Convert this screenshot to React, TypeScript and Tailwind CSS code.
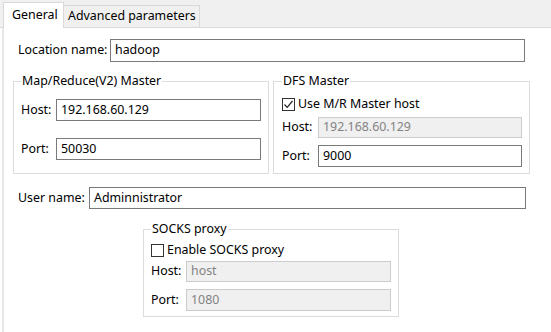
import React from "react";

const font = { fontFamily: '"Noto Sans", "Liberation Sans", sans-serif' };

function Input({ value, w, h = 22, disabled = false }: { value: string; w: number; h?: number; disabled?: boolean }) {
  return (
    <div
      className={
        "flex items-center pl-[4px] text-[12.4px] leading-none " +
        (disabled ? "bg-[#f0f0f0] border border-[#cccccc] text-[#838383]" : "bg-white border border-[#7a7a7a] text-black")
      }
      style={{ width: w, height: h }}
    >
      {value}
    </div>
  );
}

function Check({ checked }: { checked: boolean }) {
  return (
    <div className="w-[13px] h-[13px] border border-[#333333] bg-white flex items-center justify-center">
      {checked && (
        <svg width="11" height="11" viewBox="0 0 11 11">
          <path d="M1.5 5.5 L4.2 8.3 L9.5 2" stroke="#222" strokeWidth="1.2" fill="none" />
        </svg>
      )}
    </div>
  );
}

export default function App() {
  return (
    <div className="w-[551px] h-[332px] bg-white overflow-hidden text-[12.4px] text-black" style={font}>
      {/* tab bar */}
      <div className="h-[28px] bg-[#f0f0f0] border-b border-[#d9d9d9] flex items-end pl-[3px]">
        <div className="w-[61px] h-[26px] bg-white border border-[#d9d9d9] border-b-0 mb-[-1px] pl-[8px] pt-[4px] leading-[16px]">
          General
        </div>
        <div className="w-[136px] h-[22px] bg-[#f0f0f0] border border-[#d9d9d9] border-l-0 border-b-0 pl-[4px] pt-[2px] leading-[16px]">
          Advanced parameters
        </div>
      </div>
      {/* content */}
      <div className="ml-[2px] h-[304px] border-l-2 border-[#e8e8e8] flex flex-col">
        {/* location */}
        <div className="flex items-center mt-[11px] ml-[14px]">
          <div className="w-[92px]">Location name:</div>
          <Input value="hadoop" w={415} h={23} />
        </div>
        {/* groups */}
        <div className="flex mt-[11px] ml-[9px] gap-[4px]">
          <fieldset className="w-[256px] border border-[#dcdcdc] pl-[7px] pb-[11px]">
            <legend className="px-[1px] leading-[16px]">Map/Reduce(V2) Master</legend>
            <div className="flex items-center mt-[10px]">
              <div className="w-[35px]">Host:</div>
              <Input value="192.168.60.129" w={205} />
            </div>
            <div className="flex items-center mt-[17px]">
              <div className="w-[35px]">Port:</div>
              <Input value="50030" w={205} />
            </div>
          </fieldset>
          <fieldset className="w-[257px] border border-[#dcdcdc] pl-[8px] pb-[6px]">
            <legend className="px-[1px] leading-[16px]">DFS Master</legend>
            <div className="flex items-center mt-[7px] gap-[3px] h-[16px]">
              <Check checked />
              <span>Use M/R Master host</span>
            </div>
            <div className="flex items-center mt-[5px]">
              <div className="w-[36px]">Host:</div>
              <Input value="192.168.60.129" w={204} h={21} disabled />
            </div>
            <div className="flex items-center mt-[7px]">
              <div className="w-[36px]">Port:</div>
              <Input value="9000" w={204} />
            </div>
          </fieldset>
        </div>
        {/* user name */}
        <div className="flex items-center mt-[13px] ml-[14px]">
          <div className="w-[71px]">User name:</div>
          <Input value="Adminnistrator" w={437} />
        </div>
        {/* socks */}
        <div className="flex mt-[12px] ml-[139px]">
          <fieldset className="w-[256px] border border-[#dcdcdc] pl-[7px] pb-[5px]">
            <legend className="px-[1px] leading-[16px]">SOCKS proxy</legend>
            <div className="flex items-center mt-[5px] gap-[3px] h-[16px]">
              <Check checked={false} />
              <span>Enable SOCKS proxy</span>
            </div>
            <div className="flex items-center mt-[3px]">
              <div className="w-[35px]">Host:</div>
              <Input value="host" w={205} h={21} disabled />
            </div>
            <div className="flex items-center mt-[7px]">
              <div className="w-[35px]">Port:</div>
              <Input value="1080" w={205} disabled />
            </div>
          </fieldset>
        </div>
      </div>
    </div>
  );
}
